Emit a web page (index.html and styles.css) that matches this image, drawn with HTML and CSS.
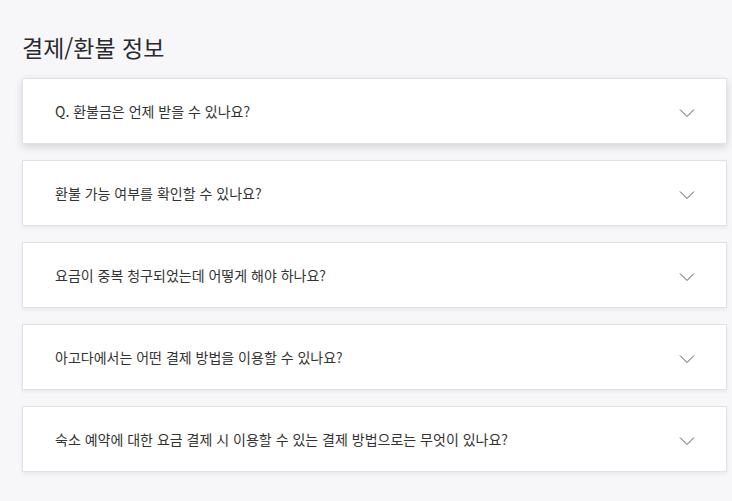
FILE: index.html
```html
<!DOCTYPE html>
<html lang="ko">
<head>
<meta charset="utf-8">
<link rel="stylesheet" href="styles.css">
</head>
<body>
<main class="page">
  <h1 class="title">결제/환불 정보</h1>
  <ul class="faq">
    <li class="item item-active">
      <span class="q">Q. 환불금은 언제 받을 수 있나요?</span>
      <svg class="chev" width="16" height="10" viewBox="0 0 16 10"><path d="M1 1.5 L8 8.5 L15 1.5" fill="none" stroke="#555" stroke-width="1"/></svg>
    </li>
    <li class="item">
      <span class="q">환불 가능 여부를 확인할 수 있나요?</span>
      <svg class="chev" width="16" height="10" viewBox="0 0 16 10"><path d="M1 1.5 L8 8.5 L15 1.5" fill="none" stroke="#555" stroke-width="1"/></svg>
    </li>
    <li class="item">
      <span class="q">요금이 중복 청구되었는데 어떻게 해야 하나요?</span>
      <svg class="chev" width="16" height="10" viewBox="0 0 16 10"><path d="M1 1.5 L8 8.5 L15 1.5" fill="none" stroke="#555" stroke-width="1"/></svg>
    </li>
    <li class="item">
      <span class="q">아고다에서는 어떤 결제 방법을 이용할 수 있나요?</span>
      <svg class="chev" width="16" height="10" viewBox="0 0 16 10"><path d="M1 1.5 L8 8.5 L15 1.5" fill="none" stroke="#555" stroke-width="1"/></svg>
    </li>
    <li class="item">
      <span class="q">숙소 예약에 대한 요금 결제 시 이용할 수 있는 결제 방법으로는 무엇이 있나요?</span>
      <svg class="chev" width="16" height="10" viewBox="0 0 16 10"><path d="M1 1.5 L8 8.5 L15 1.5" fill="none" stroke="#555" stroke-width="1"/></svg>
    </li>
  </ul>
</main>
</body>
</html>
```
FILE: styles.css
```css
html, body {
  margin: 0;
  padding: 0;
  background: #f7f7f9;
}
body {
  font-family: "Noto Sans CJK KR", "Noto Sans", sans-serif;
  color: #2a2a2e;
  width: 732px;
  height: 501px;
  overflow: hidden;
}
.page {
  padding: 31px 5px 0 22px;
}
.title {
  margin: 0 0 15px 0;
  font-size: 23px;
  font-weight: 400;
  line-height: 32px;
  color: #2a2a2e;
}
.faq {
  list-style: none;
  margin: 0;
  padding: 0;
  display: flex;
  flex-direction: column;
  gap: 16px;
}
.item {
  box-sizing: border-box;
  height: 66px;
  background: #fff;
  border: 1px solid #e2e2e4;
  box-shadow: 0 2px 4px rgba(0,0,0,0.06);
  display: flex;
  align-items: center;
  justify-content: space-between;
  padding: 0 31px 0 32px;
}
.item-active {
  box-shadow: 0 3px 8px rgba(0,0,0,0.14);
}
.q {
  font-size: 14px;
  color: #333;
  line-height: 20px;
}
.chev {
  display: block;
  margin-top: 4px;
}
```
